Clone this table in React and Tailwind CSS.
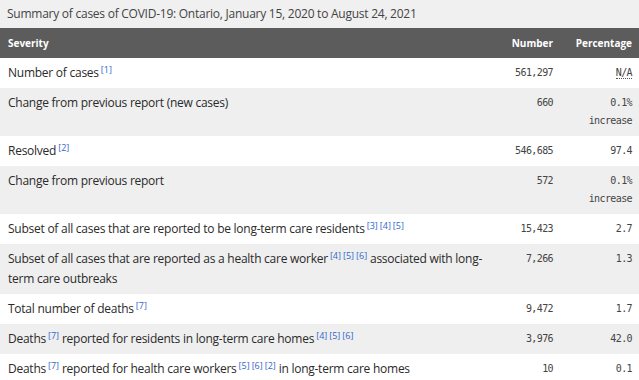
import React from 'react';

const Ref = ({ n }) => (
    <sup className="text-[9px] text-[#3366cc] ml-[2px] tracking-normal">[{n}]</sup>
);

const Refs = ({ list }) => (
    <>
        {list.map((n, i) => (
            <Ref key={i} n={n} />
        ))}
    </>
);

const rows = [
    { label: <>Number of cases<Ref n={1} /></>, num: '561,297', pct: <span className="border-b border-dotted border-[#555]">N/A</span> },
    { label: 'Change from previous report (new cases)', num: '660', pct: <>0.1%<br />increase</> },
    { label: <>Resolved<Ref n={2} /></>, num: '546,685', pct: '97.4' },
    { label: 'Change from previous report', num: '572', pct: <>0.1%<br />increase</> },
    { label: <>Subset of all cases that are reported to be long-term care residents<Refs list={[3, 4, 5]} /></>, num: '15,423', pct: '2.7' },
    { label: <>Subset of all cases that are reported as a health care worker<Refs list={[4, 5, 6]} /> associated with long-term care outbreaks</>, num: '7,266', pct: '1.3' },
    { label: <>Total number of deaths<Ref n={7} /></>, num: '9,472', pct: '1.7' },
    { label: <>Deaths<Ref n={7} /> reported for residents in long-term care homes<Refs list={[4, 5, 6]} /></>, num: '3,976', pct: '42.0' },
    { label: <>Deaths<Ref n={7} /> reported for health care workers<Refs list={[5, 6, 2]} /> in long-term care homes</>, num: '10', pct: '0.1' },
];

const App = () => {
    return (
        <div className="w-[639px] h-[380px] overflow-hidden bg-white font-['Open_Sans',sans-serif] text-[#2a2a2a]">
            {/* Caption */}
            <div className="h-[28px] bg-[#f0f0f0] px-[7px] flex items-center text-[12px] tracking-[-0.25px] text-[#444]">
                Summary of cases of COVID-19: Ontario, January 15, 2020 to August 24, 2021
            </div>

            <table className="w-full border-collapse table-fixed">
                <colgroup>
                    <col className="w-[500px]" />
                    <col className="w-[60px]" />
                    <col className="w-[79px]" />
                </colgroup>
                <thead>
                    <tr className="bg-[#5c5c5c] text-white text-[10px] font-bold h-[30px]">
                        <th className="text-left pl-[8px]">Severity</th>
                        <th className="text-right pr-[7px]">Number</th>
                        <th className="text-right pr-[7px]">Percentage</th>
                    </tr>
                </thead>
                <tbody>
                    {rows.map((r, i) => (
                        <tr key={i} className={i % 2 === 0 ? 'bg-white' : 'bg-[#efefef]'}>
                            <td className="align-top pl-[8px] pr-[10px] py-[5px] text-[12px] tracking-[-0.25px] leading-[20px]">{r.label}</td>
                            <td className="align-top text-right pr-[7px] py-[6px] font-['DejaVu_Sans_Mono',monospace] text-[10px] tracking-[-0.6px] leading-[18px] text-[#444]">{r.num}</td>
                            <td className="align-top text-right pr-[7px] py-[6px] font-['DejaVu_Sans_Mono',monospace] text-[10px] tracking-[-0.6px] leading-[18px] text-[#444]">{r.pct}</td>
                        </tr>
                    ))}
                </tbody>
            </table>
        </div>
    );
};

export default App;
